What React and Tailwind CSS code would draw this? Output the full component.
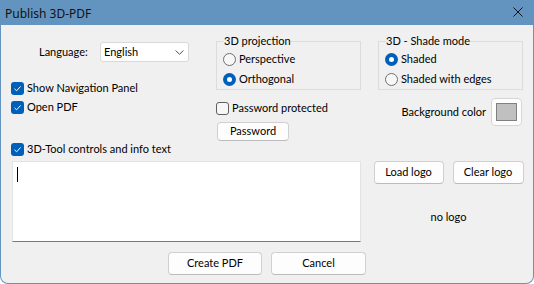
import React from "react";

const font = { fontFamily: 'Lato, "Noto Sans", sans-serif' };

const Check = ({ checked, label }) => (
  <div className="flex items-center h-[19px]">
    {checked ? (
      <span className="w-[13px] h-[13px] rounded-[3px] bg-[#005fb8] flex items-center justify-center">
        <svg width="9" height="9" viewBox="0 0 9 9">
          <path d="M1.5 4.8 L3.6 6.8 L7.6 2.4" fill="none" stroke="#fff" strokeWidth="1" />
        </svg>
      </span>
    ) : (
      <span className="w-[13px] h-[13px] rounded-[3px] border border-[#5f5f5f] bg-[#f7f7f7]" />
    )}
    <span className="ml-[3px]">{label}</span>
  </div>
);

const Radio = ({ checked, label }) => (
  <div className="flex items-center h-[20px]">
    {checked ? (
      <span className="w-[13px] h-[13px] rounded-full bg-[#005fb8] flex items-center justify-center">
        <span className="w-[5px] h-[5px] rounded-full bg-white" />
      </span>
    ) : (
      <span className="w-[13px] h-[13px] rounded-full border border-[#6f6f6f] bg-[#f7f7f7]" />
    )}
    <span className="ml-[3px]">{label}</span>
  </div>
);

const Btn = ({ children, className = "" }) => (
  <button
    className={`h-[23px] bg-[#fdfdfd] border border-[#d0d0d0] border-b-[#bcbcbc] rounded-[4px] flex items-center justify-center ${className}`}
  >
    {children}
  </button>
);

const Group = ({ legend, children }) => (
  <div className="w-[145px] h-[49px] border border-[#dcdcdc] pl-[6px]">
    <div className="-mt-[9px] h-[16px] flex">
      <span className="bg-[#f0f0f0] ml-[1px] leading-[16px]">{legend}</span>
    </div>
    {children}
  </div>
);

export default function App() {
  return (
    <div className="w-[534px] h-[284px] bg-white text-[11px] text-black" style={font}>
      <div className="w-[534px] h-[284px] bg-[#6394bf] rounded-b-[8px] flex flex-col px-[1px] pb-[1px]">
        {/* title bar */}
        <div className="h-[25px] flex items-center justify-between pl-[4px] pr-[10px]">
          <span className="text-[12px] text-[#111] font-['Noto_Sans'] mt-[2px]">Publish 3D-PDF</span>
          <svg width="10" height="10" viewBox="0 0 10 10" className="-mt-[1px]">
            <path d="M0.5 0.5 L9.5 9.5 M9.5 0.5 L0.5 9.5" stroke="#111" strokeWidth="1" />
          </svg>
        </div>

        {/* body */}
        <div className="flex-1 bg-[#f0f0f0] rounded-b-[7px] flex flex-col pl-[10px] pt-[16px]">
          <div className="flex h-[99px]">
            {/* left column */}
            <div className="w-[205px] flex flex-col">
              <div className="mt-[1px] flex items-center h-[20px]">
                <span className="ml-[28px] w-[61px]">Language:</span>
                <div className="w-[89px] h-[20px] bg-white border border-[#d9d9d9] rounded-[3px] flex items-center justify-between pl-[3px] pr-[4px]">
                  <span>English</span>
                  <svg width="9" height="5" viewBox="0 0 9 5">
                    <path d="M0.5 0.5 L4.5 4.2 L8.5 0.5" fill="none" stroke="#555" strokeWidth="1" />
                  </svg>
                </div>
              </div>
              <div className="mt-[17px]">
                <Check checked label="Show Navigation Panel" />
                <Check checked label="Open PDF" />
              </div>
            </div>

            {/* middle column */}
            <div className="w-[162px] flex flex-col">
              <Group legend="3D projection">
                <Radio label="Perspective" />
                <Radio checked label="Orthogonal" />
              </Group>
              <div className="mt-[9px]">
                <Check label="Password protected" />
              </div>
              <Btn className="mt-[4px] ml-[1px] w-[72px]">Password</Btn>
            </div>

            {/* right column */}
            <div className="flex flex-col">
              <Group legend="3D - Shade mode">
                <Radio checked label="Shaded" />
                <Radio label="Shaded with edges" />
              </Group>
              <div className="mt-[8px] flex items-center justify-end w-[144px]">
                <span className="mr-[5px]">Background color</span>
                <span className="w-[31px] h-[28px] bg-[#fdfdfd] border border-[#d6d6d6] rounded-[4px] flex items-center justify-center">
                  <span className="w-[21px] h-[18px] bg-[#c0c0c0] border border-[#808080]" />
                </span>
              </div>
            </div>
          </div>

          <div className="flex">
            <div className="flex flex-col w-[363px]">
              <Check checked label="3D-Tool controls and info text" />
              <div className="mt-[2px] ml-[1px] w-[349px] h-[81px] bg-white border border-[#e3e3e3] border-b-[#7a7a7a] pl-[4px] pt-[5px]">
                <div className="w-[1px] h-[15px] bg-black" />
              </div>
            </div>
            <div className="flex flex-col items-center w-[149px]">
              <div className="mt-[21px] flex gap-[9px]">
                <Btn className="w-[70px]">Load logo</Btn>
                <Btn className="w-[71px]">Clear logo</Btn>
              </div>
              <span className="mt-[25px] leading-[16px]">no logo</span>
            </div>
          </div>

          <div className="mt-[10px] flex justify-center gap-[9px] pr-[10px]">
            <Btn className="w-[94px]">Create PDF</Btn>
            <Btn className="w-[95px]">Cancel</Btn>
          </div>
        </div>
      </div>
    </div>
  );
}
